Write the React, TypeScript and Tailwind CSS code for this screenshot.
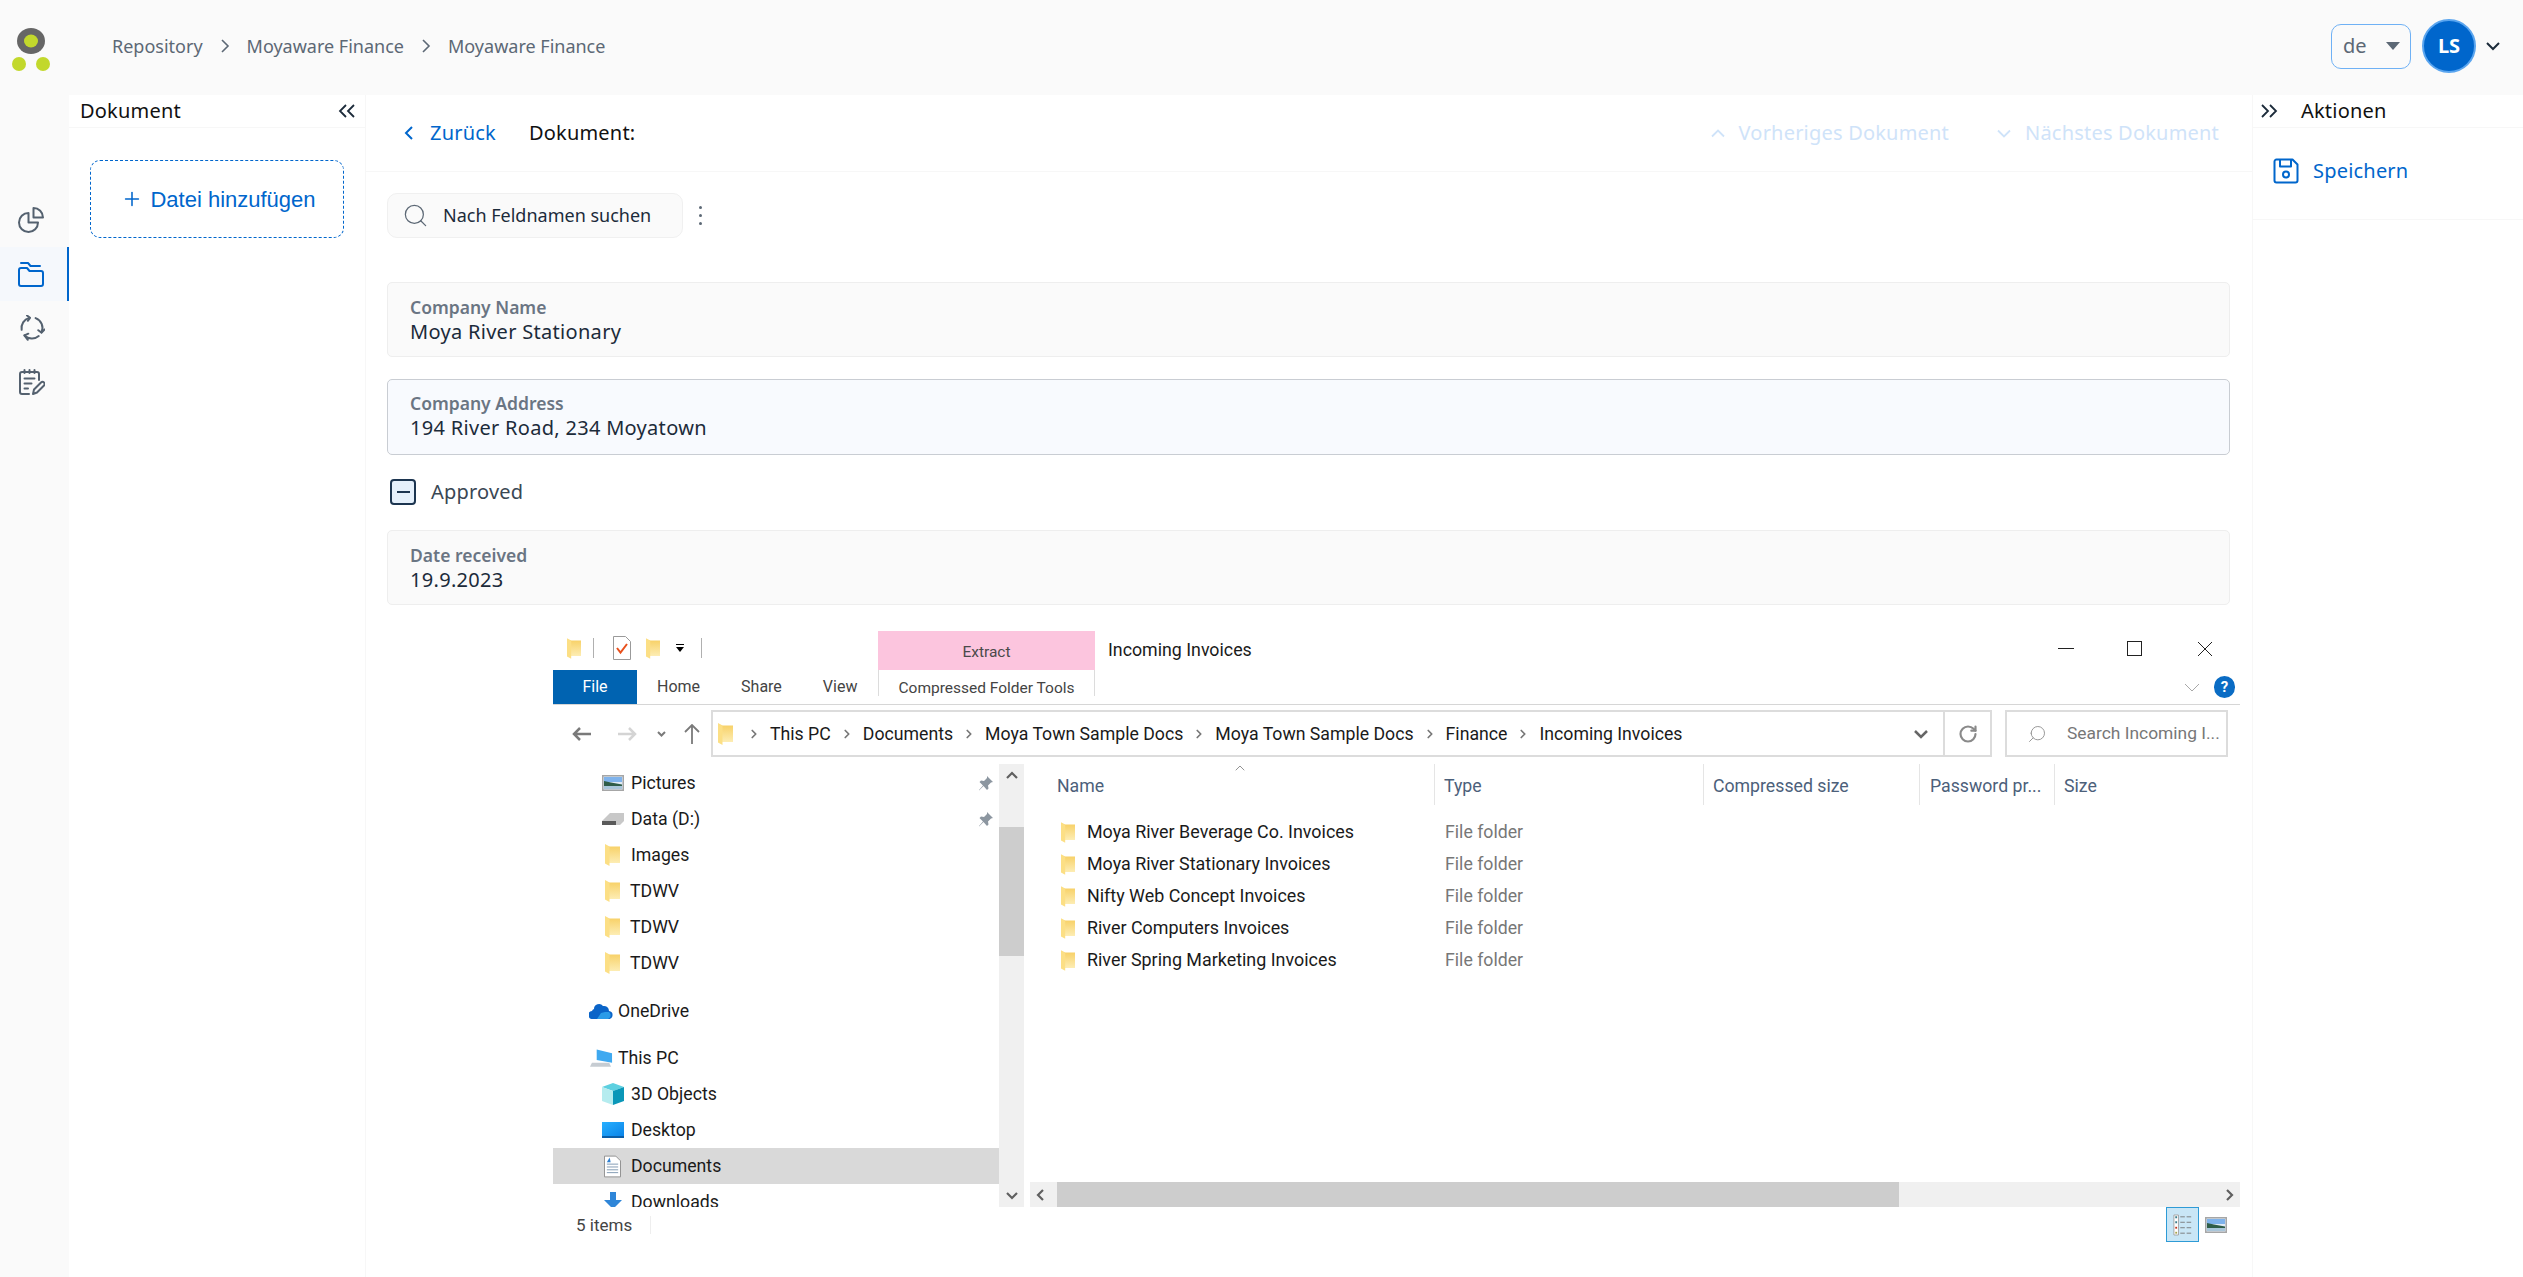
import React from 'react';
import { ChevronRight, ChevronUp, RotateCw, Search, Plus } from 'lucide-react';

const Pie = ({ className }: { className?: string }) => (
  <svg viewBox="0 0 26 26" fill="none" stroke="currentColor" strokeWidth="2" strokeLinejoin="round" className={className}>
    <path d="M10.500 6a9.500 9.500 0 1 0 9.500 9.500h-9.500z" />
    <path d="M15.500 1a9.500 9.500 0 0 1 9.500 9.500h-9.500z" />
  </svg>
);

const Folders = ({ className }: { className?: string }) => (
  <svg viewBox="0 0 26 26" fill="none" stroke="currentColor" strokeWidth="2" strokeLinejoin="round" strokeLinecap="round" className={className}>
    <path d="M1 9a2 2 0 0 1 2-2h6l2.500 3H23a2 2 0 0 1 2 2v11a2 2 0 0 1-2 2H3a2 2 0 0 1-2-2z" />
    <path d="M3 2h7l2.500 3H22" />
  </svg>
);

const Cycle = ({ className }: { className?: string }) => (
  <svg viewBox="0 0 26 26" fill="none" stroke="currentColor" strokeWidth="2" strokeLinecap="round" strokeLinejoin="round" className={className}>
    <path d="M2.660 14.820A10.500 10.500 0 0 1 10.280 2.860" />
    <path d="M16.590 3.130A10.500 10.500 0 0 1 22.500 17.400" />
    <path d="M19.750 21.040A10.500 10.500 0 0 1 5.580 20.420" />
    <path d="M8 .5l3 2.300-2.200 3" />
    <path d="M25.500 14.500l-2.900 3.200-3.300-2.500" />
    <path d="M8.800 24.800l-3.400-4.400 3.900-1.700" />
  </svg>
);

const NotesEdit = ({ className }: { className?: string }) => (
  <svg viewBox="0 0 26 26" fill="none" stroke="currentColor" strokeWidth="2" strokeLinecap="round" strokeLinejoin="round" className={className}>
    <path d="M10 25H3a2 2 0 0 1-2-2V5a2 2 0 0 1 2-2h15a2 2 0 0 1 2 2v6" />
    <path d="M5.500 1v3M10.500 1v3M15.500 1v3" />
    <path d="M5.500 9.500h10M5.500 14.500h7M5.500 19.500h3.500" />
    <path d="M14 25l1-4.500 7-7a2 2 0 0 1 3 3l-7 7z" />
  </svg>
);

const Floppy = ({ className }: { className?: string }) => (
  <svg viewBox="0 0 26 26" fill="none" stroke="currentColor" strokeWidth="2" strokeLinejoin="round" className={className}>
    <path d="M3.500 1.500h16l5 5v16a2 2 0 0 1-2 2h-19a2 2 0 0 1-2-2v-19a2 2 0 0 1 2-2z" />
    <path d="M7 1.500v7h11v-7" />
    <circle cx="13" cy="16.500" r="3" />
  </svg>
);

const Logo = () => (
  <svg viewBox="0 0 38 43" className="w-[38px] h-[43px]">
    <ellipse cx="19" cy="13" rx="14" ry="13" fill="#666666" />
    <ellipse cx="19" cy="13" rx="7" ry="6.500" fill="#c2d82c" />
    <circle cx="7" cy="36" r="7" fill="#c2d82c" />
    <circle cx="31" cy="36" r="7" fill="#c2d82c" />
  </svg>
);

const Line = ({ d, w, h, className, sw = 2 }: { d: string; w: number; h: number; className?: string; sw?: number }) => (
  <svg viewBox={`0 0 ${w} ${h}`} width={w} height={h} fill="none" stroke="currentColor" strokeWidth={sw} className={className}>
    <path d={d} />
  </svg>
);

// windows folder, seen edge on
const WinFolder = ({ className }: { className?: string }) => (
  <svg viewBox="0 0 15 22" className={className}>
    <defs>
      <linearGradient id="fold" x1="0" y1="0" x2="0" y2="1">
        <stop offset="0" stopColor="#f7cf62" />
        <stop offset="1" stopColor="#fdedb4" />
      </linearGradient>
    </defs>
    <path d="M0 1l4 1.500h11V19H0z" fill="url(#fold)" />
    <path d="M0 0l4.500 2.500V22L0 19.500z" fill="#fcdf85" />
  </svg>
);

const Pin = () => (
  <svg viewBox="0 0 16 16" className="w-[16px] h-[16px]" fill="#8c96a0">
    <path d="M9 1l6 6-2 .5-3 3 .5 3L9 15 5.500 11 1 15.500 1 15l4-4.500L1.500 7 3 5.500l3 .5 3-3z" />
  </svg>
);

const Photo = ({ className }: { className?: string }) => (
  <svg viewBox="0 0 22 16" className={className}>
    <rect x=".75" y=".75" width="20.500" height="14.500" fill="#dfeaf5" stroke="#a6a6a6" strokeWidth="1.500" />
    <path d="M2 2h18v5H2z" fill="#7fb3ec" />
    <path d="M2 6l7 1.500L20 9.500V11H2z" fill="#2f5d48" />
    <path d="M2 11h18v3H2z" fill="#a9c6da" />
  </svg>
);

const SmallChevron = ({ dir }: { dir: 'up' | 'down' | 'left' | 'right' }) => {
  const d = {
    up: 'M1 8l5-5 5 5',
    down: 'M1 4l5 5 5-5',
    left: 'M8 1L3 6l5 5',
    right: 'M4 1l5 5-5 5',
  }[dir];
  return (
    <svg viewBox="0 0 12 12" className="w-[12px] h-[12px]" fill="none" stroke="#606060" strokeWidth="2.200">
      <path d={d} />
    </svg>
  );
};

const Field = ({ label, value, active }: { label: string; value: string; active?: boolean }) => (
  <div
    className={`mr-[22px] rounded-[5px] border px-[22px] ${
      active ? 'h-[76px] pt-[13px] bg-[#f8fafe] border-[#c9cdd3]' : 'h-[75px] pt-[14px] bg-[#fafafa] border-[#eeeeee]'
    }`}
  >
    <div className="text-[17.500px] leading-[20px] font-semibold text-[#6a7583]">{label}</div>
    <div className="text-[20px] leading-[30px] tracking-[0.3px] text-[#1c2b3a]">{value}</div>
  </div>
);

const files = [
  'Moya River Beverage Co. Invoices',
  'Moya River Stationary Invoices',
  'Nifty Web Concept Invoices',
  'River Computers Invoices',
  'River Spring Marketing Invoices',
];

const crumbs = ['This PC', 'Documents', 'Moya Town Sample Docs', 'Moya Town Sample Docs', 'Finance', 'Incoming Invoices'];

const Explorer = () => (
  <div className="ml-[166px] w-[1687px] mt-[26px] font-['Roboto',sans-serif] text-[17.700px] text-[#1a1a1a]">
    {/* title bar */}
    <div className="flex h-[39px]">
      <div className="flex items-center w-[325px] pl-[14px] pb-[5px]">
        <WinFolder className="w-[14px] h-[21px]" />
        <div className="ml-[12px] w-px h-[20px] bg-[#b0b0b0]" />
        <svg viewBox="0 0 18 24" className="ml-[19px] w-[18px] h-[24px]">
          <path d="M.5.5h12l5 5v18H.5z" fill="#fff" stroke="#9a9a9a" />
          <path d="M4 12l3.500 4.500L14 8" fill="none" stroke="#e8501c" strokeWidth="2" />
        </svg>
        <WinFolder className="ml-[15px] w-[14px] h-[21px]" />
        <div className="ml-[16px] flex flex-col items-center">
          <div className="w-[8px] h-[1px] bg-black mb-[2px]" />
          <div className="w-0 h-0 border-x-[4px] border-x-transparent border-t-[5px] border-t-black" />
        </div>
        <div className="ml-[17px] w-px h-[20px] bg-[#b0b0b0]" />
      </div>
      <div className="w-[217px] bg-[#fcc5de] flex items-end justify-center pb-[6px] text-[15.500px] text-[#4a4a4a]">Extract</div>
      <div className="ml-[13px] pt-[6px] text-[17.800px]">Incoming Invoices</div>
      <div className="ml-auto flex items-start pt-[10px] pr-[27px]">
        <div className="mt-[7px] w-[16px] h-[1px] bg-[#222]" />
        <div className="ml-[53px] w-[15px] h-[15px] border border-[#222]" />
        <svg viewBox="0 0 16 16" className="ml-[55px] w-[16px] h-[16px]" stroke="#222" strokeWidth="1"><path d="M1 1l14 14M15 1L1 15" /></svg>
      </div>
    </div>
    {/* ribbon tabs */}
    <div className="flex h-[35px] border-b border-[#d6d6d6] items-stretch text-[16px]">
      <div className="w-[84px] bg-[#0063b1] text-white flex items-center justify-center">File</div>
      <div className="flex items-center w-[241px] text-[#444]">
        <span className="ml-[20px]">Home</span>
        <span className="ml-[41px]">Share</span>
        <span className="ml-[41px]">View</span>
      </div>
      <div className="w-[217px] h-[26px] border-x border-[#dcdcdc] flex items-start justify-center pt-[8px] text-[15.500px] leading-[20px] text-[#444]">
        Compressed Folder Tools
      </div>
      <div className="ml-auto flex items-center pr-[5px]">
        <Line d="M1 1l7 7 7-7" w={16} h={9} sw={1} className="text-[#a8a8a8]" />
        <div className="ml-[14px] w-[21px] h-[22px] rounded-full bg-[#0a6cc4] text-white text-[15px] font-bold flex items-center justify-center">?</div>
      </div>
    </div>
    {/* address bar */}
    <div className="flex items-center h-[47px] mt-[5px]">
      <div className="flex items-center w-[158px] pl-[19px]">
        <Line d="M8 2L2 8l6 6M2 8h17" w={19} h={16} sw={2.500} className="text-[#7a7a7a]" />
        <Line d="M11 2l6 6-6 6M17 8H0" w={19} h={16} sw={2.500} className="ml-[27px] text-[#d4d4d4]" />
        <Line d="M1 1l3.500 3.500L8 1" w={9} h={6} sw={2} className="ml-[20px] text-[#7a7a7a]" />
        <Line d="M1 8l7-7 7 7M8 1v19" w={16} h={20} sw={1.800} className="ml-[18px] text-[#7a7a7a]" />
      </div>
      <div className="flex items-center w-[1281px] h-full border-2 border-[#dcdcdc] pl-[5px]">
        <WinFolder className="w-[15px] h-[22px]" />
        <div className="flex items-center pt-[1px]">
          {crumbs.map((c, i) => (
            <React.Fragment key={i}>
              <ChevronRight className={`w-[14px] h-[14px] text-[#777] mx-[9px] ${i === 0 ? 'ml-[14px]' : ''}`} strokeWidth={3} />
              <span className="whitespace-nowrap">{c}</span>
            </React.Fragment>
          ))}
        </div>
        <div className="ml-auto flex h-full items-center">
          <Line d="M2 2l6 6 6-6" w={16} h={10} sw={2.500} className="text-[#666] mr-[14px]" />
          <div className="w-[47px] h-full border-l-2 border-[#dcdcdc] flex items-center justify-center">
            <RotateCw className="w-[20px] h-[20px] text-[#8a8a8a]" strokeWidth={2.600} />
          </div>
        </div>
      </div>
      <div className="ml-[13px] w-[223px] h-full border-2 border-[#dcdcdc] flex items-center pl-[20px] text-[#777]">
        <Search className="w-[20px] h-[20px] text-[#999] -scale-x-100 shrink-0" strokeWidth={1.200} />
        <span className="ml-[20px] text-[17.400px] whitespace-nowrap">Search Incoming I...</span>
      </div>
    </div>
    {/* panes */}
    <div className="flex h-[443px] mt-[7px]">
      <div className="w-[446px] overflow-hidden pt-[1px]">
        <div className="flex items-center h-[36px] pl-[49px] pr-[5px]">
          <Photo className="w-[22px] h-[16px]" />
          <span className="ml-[7px]">Pictures</span>
          <span className="ml-auto"><Pin /></span>
        </div>
        <div className="flex items-center h-[36px] pl-[49px] pr-[5px]">
          <svg viewBox="0 0 22 12" className="w-[22px] h-[12px]"><path d="M0 8l8-8h14v8l-4 4H3z" fill="#c8c8c8" /><path d="M0 8h14v4H0z" fill="#5a5a5a" /></svg>
          <span className="ml-[7px]">Data (D:)</span>
          <span className="ml-auto"><Pin /></span>
        </div>
        {['Images', 'TDWV', 'TDWV', 'TDWV'].map((n, i) => (
          <div key={i} className="flex items-center h-[36px] pl-[52px]">
            <WinFolder className="w-[15px] h-[22px]" />
            <span className={n === 'Images' ? 'ml-[11px]' : 'ml-[10px]'}>{n}</span>
          </div>
        ))}
        <div className="flex items-center h-[36px] mt-[12px] pl-[36px]">
          <svg viewBox="0 0 24 16" className="w-[24px] h-[16px]">
            <path d="M5 6a5 5 0 0 1 9-3 5 5 0 0 1 6 5 4 4 0 0 1-1 8H4a4 4 0 0 1-1-8 3 3 0 0 1 2-2z" fill="#0a64c8" />
            <path d="M8 16l4-6 4-1 4 0a4 4 0 0 1-1 7z" fill="#2a9be8" />
          </svg>
          <span className="ml-[5px]">OneDrive</span>
        </div>
        <div className="flex items-center h-[35px] mt-[12px] pl-[37px]">
          <svg viewBox="0 0 24 20" className="w-[23px] h-[20px]">
            <path d="M7 0l16 4v10l-16-3z" fill="#3fa9f0" />
            <path d="M2 14h18l2 4H0z" fill="#c6ccd2" />
          </svg>
          <span className="ml-[5px]">This PC</span>
        </div>
        <div className="flex items-center h-[36px] pl-[49px]">
          <svg viewBox="0 0 22 22" className="w-[22px] h-[22px]">
            <path d="M11 0l11 4-11 4L0 4z" fill="#5dd0e0" />
            <path d="M0 4l11 4v14L0 18z" fill="#b5ecef" />
            <path d="M22 4l-11 4v14l11-4z" fill="#0a97b8" />
          </svg>
          <span className="ml-[7px]">3D Objects</span>
        </div>
        <div className="flex items-center h-[36px] pl-[49px]">
          <div className="w-[22px] h-[16px] bg-gradient-to-br from-[#28b0ff] to-[#0a84e8] border-b-2 border-[#0a5ea8]" />
          <span className="ml-[7px]">Desktop</span>
        </div>
        <div className="flex items-center h-[36px] pl-[51px] bg-[#d9d9d9]">
          <svg viewBox="0 0 18 23" className="w-[17px] h-[23px]">
            <path d="M.5.5h12l5 5v17H.5z" fill="#fff" stroke="#8d8d8d" />
            <path d="M3 9h12M3 12h12M3 15h12M3 18h12" stroke="#7e98b0" strokeWidth="1" />
            <path d="M3 7l3-5 1 5z" fill="#2f7fcf" />
          </svg>
          <span className="ml-[10px]">Documents</span>
        </div>
        <div className="flex items-center h-[36px] pl-[51px]">
          <svg viewBox="0 0 18 20" className="w-[18px] h-[20px]">
            <path d="M6 0h6v8h6l-9 9-9-9h6z" fill="#2f86d8" />
          </svg>
          <span className="ml-[9px]">Downloads</span>
        </div>
      </div>
      <div className="w-[25px] bg-[#f0f0f0] flex flex-col items-center justify-between py-[6px] relative">
        <SmallChevron dir="up" />
        <div className="absolute left-0 top-[63px] w-full h-[129px] bg-[#cdcdcd]" />
        <SmallChevron dir="down" />
      </div>
      <div className="ml-[6px] flex-1 flex flex-col">
        <div className="flex h-[41px] text-[#4c607a] items-stretch">
          <div className="w-[405px] pl-[27px] pt-[3px] flex items-center border-r border-[#e5e5e5] relative">
            Name
            <ChevronUp className="absolute left-[202px] top-[-4px] w-[16px] h-[16px] text-[#777]" strokeWidth={1.200} />
          </div>
          <div className="w-[269px] pl-[9px] pt-[3px] flex items-center border-r border-[#e5e5e5]">Type</div>
          <div className="w-[216px] pl-[9px] pt-[3px] flex items-center border-r border-[#e5e5e5]">Compressed size</div>
          <div className="w-[135px] pl-[10px] pt-[3px] flex items-center border-r border-[#e5e5e5] whitespace-nowrap">Password pr...</div>
          <div className="pl-[9px] pt-[3px] flex items-center">Size</div>
        </div>
        <div className="mt-[11px] flex-1">
          {files.map((f) => (
            <div key={f} className="flex items-center h-[32px]">
              <WinFolder className="ml-[31px] w-[14px] h-[21px] shrink-0" />
              <span className="ml-[12px] w-[358px] text-[17.900px] whitespace-nowrap">{f}</span>
              <span className="text-[#777]">File folder</span>
            </div>
          ))}
        </div>
        <div className="h-[25px] bg-[#f0f0f0] relative flex items-center justify-between px-[5px]">
          <SmallChevron dir="left" />
          <div className="absolute left-[27px] top-0 h-full w-[842px] bg-[#cdcdcd]" />
          <SmallChevron dir="right" />
        </div>
      </div>
    </div>
    {/* status bar */}
    <div className="flex h-[35px] items-center text-[#444]">
      <span className="ml-[23px] pt-[2px] text-[17px]">5 items</span>
      <div className="ml-[18px] w-px h-[18px] bg-[#eeeeee]" />
      <div className="ml-auto flex items-center pr-[13px]">
        <div className="w-[33px] h-[35px] bg-[#c9e6f6] border border-[#2e9bd6] flex items-center justify-center">
          <svg viewBox="0 0 22 24" className="w-[20px] h-[22px]">
            <path d="M1 1h5v22H1z" fill="#fff" stroke="#a0a0a0" />
            <path d="M2.500 3.500h2M2.500 9h2" stroke="#3a7d8c" strokeWidth="2" />
            <path d="M2.500 15h2" stroke="#c0321c" strokeWidth="2" />
            <path d="M2.500 20.500h2" stroke="#a8a44a" strokeWidth="2" />
            <path d="M8 3h5M15 3h5M8 9h5M15 9h5M8 15h5M15 15h5M8 21h5M15 21h5" stroke="#777" strokeWidth="1" />
          </svg>
        </div>
        <Photo className="ml-[6px] w-[22px] h-[16px]" />
      </div>
    </div>
  </div>
);

export default function App() {
  return (
    <div className="w-[2523px] h-[1277px] overflow-hidden bg-white font-['Noto_Sans',sans-serif] text-[#1c2b3a]">
      <header className="flex items-center h-[95px] pb-[3px] bg-[#fafafa]">
        <div className="ml-[12px] mt-[6px]"><Logo /></div>
        <nav className="ml-[62px] flex items-center text-[18px] text-[#5c6875]">
          <span>Repository</span>
          <Line d="M2 1l6 6-6 6" w={10} h={14} sw={1.600} className="mx-[17px]" />
          <span>Moyaware Finance</span>
          <Line d="M2 1l6 6-6 6" w={10} h={14} sw={1.600} className="mx-[17px]" />
          <span>Moyaware Finance</span>
        </nav>
        <div className="ml-auto flex items-center">
          <div className="flex items-center justify-between w-[80px] h-[45px] rounded-[10px] border border-[#6fb1f5] pl-[11px] pr-[10px] text-[20px] text-[#5c6875]">
            <span>de</span>
            <div className="w-0 h-0 border-x-[7px] border-x-transparent border-t-[8px] border-t-[#5c6875]" />
          </div>
          <div className="ml-[11px] w-[54px] h-[54px] rounded-full bg-[#0066cc] border-2 border-[#5aa5ef] text-white font-bold text-[20px] flex items-center justify-center">LS</div>
          <Line d="M1 1l6 6 6-6" w={14} h={9} sw={2} className="ml-[10px] mr-[23px]" />
        </div>
      </header>
      <div className="flex h-[1182px]">
        <aside className="w-[69px] shrink-0 bg-[#fafafa] flex flex-col pt-[98px]">
          <div className="h-[54px] pr-[7px] flex items-center justify-center text-[#54616f]"><Pie className="w-[26px] h-[26px]" /></div>
          <div className="h-[54px] pr-[5px] flex items-center justify-center bg-[#f5f8fc] border-r-2 border-[#0066cc] text-[#0066cc]"><Folders className="w-[26px] h-[26px]" /></div>
          <div className="h-[54px] pr-[5px] flex items-center justify-center text-[#54616f]"><Cycle className="w-[26px] h-[26px]" /></div>
          <div className="h-[54px] pr-[6px] flex items-center justify-center text-[#54616f]"><NotesEdit className="w-[26px] h-[26px]" /></div>
        </aside>
        <section className="w-[297px] shrink-0 border-r border-[#f7f7f7]">
          <div className="flex items-center justify-between h-[33px] pl-[11px] pr-[9px] border-b border-[#f7f7f7]">
            <span className="text-[20px] tracking-[0.2px] text-[#111]">Dokument</span>
            <Line d="M8 1L2 7l6 6M16 1l-6 6 6 6" w={18} h={14} sw={1.800} />
          </div>
          <div className="mt-[32px] ml-[21px] w-[254px] h-[78px] pl-[3px] rounded-[10px] border-[1.500px] border-dashed border-[#0066cc] flex items-center justify-center font-['Liberation_Sans',sans-serif] text-[22px] text-[#0066cc]">
            <Plus className="w-[22px] h-[22px] mr-[7px]" strokeWidth={1.700} />
            Datei hinzufügen
          </div>
        </section>
        <main className="flex-1 min-w-0">
          <div className="flex items-center h-[77px] border-b border-[#f7f7f7] pl-[38px] pr-[33px] text-[20px] tracking-[0.2px]">
            <Line d="M8 1L2 7l6 6" w={10} h={14} sw={2} className="text-[#0066cc]" />
            <span className="ml-[16px] text-[#0066cc]">Zurück</span>
            <span className="ml-[33px] text-[#111]">Dokument:</span>
            <div className="ml-auto flex items-center text-[#cfe3f9]">
              <Line d="M1 7.500l6-6 6 6" w={14} h={9} sw={1.800} />
              <span className="ml-[14px]">Vorheriges Dokument</span>
              <Line d="M1 1.500l6 6 6-6" w={14} h={9} sw={1.800} className="ml-[48px]" />
              <span className="ml-[14px]">Nächstes Dokument</span>
            </div>
          </div>
          <div className="pl-[21px]">
            <div className="mt-[21px] flex items-center">
              <div className="flex items-center w-[296px] h-[45px] rounded-[10px] border border-[#f0f0f0] bg-[#fafafa] pl-[14px]">
                <Search className="w-[27px] h-[27px] text-[#5c6875] shrink-0" strokeWidth={1.100} />
                <span className="ml-[14px] text-[18px] whitespace-nowrap text-[#1c2b3a]">Nach Feldnamen suchen</span>
              </div>
              <div className="ml-[16px] flex flex-col gap-[5px]">
                <div className="w-[3px] h-[3px] rounded-full bg-[#5c6875]" />
                <div className="w-[3px] h-[3px] rounded-full bg-[#5c6875]" />
                <div className="w-[3px] h-[3px] rounded-full bg-[#5c6875]" />
              </div>
            </div>
            <div className="mt-[44px]"><Field label="Company Name" value="Moya River Stationary" /></div>
            <div className="mt-[22px]"><Field label="Company Address" value="194 River Road, 234 Moyatown" active /></div>
            <div className="mt-[24px] flex items-center h-[26px] pl-[3px]">
              <div className="w-[26px] h-[26px] rounded-[4px] border-2 border-[#1c3550] bg-[#e5f0fb] flex items-center justify-center">
                <div className="w-[13px] h-[2px] bg-[#1c3550]" />
              </div>
              <span className="ml-[15px] text-[20px] tracking-[0.2px] text-[#3a4754]">Approved</span>
            </div>
            <div className="mt-[25px]"><Field label="Date received" value="19.9.2023" /></div>
            <Explorer />
          </div>
        </main>
        <section className="w-[271px] shrink-0 border-l border-[#f7f7f7]">
          <div className="flex items-center h-[33px] pl-[7px] border-b border-[#f7f7f7]">
            <Line d="M2 1l6 6-6 6M10 1l6 6-6 6" w={18} h={14} sw={1.800} />
            <span className="ml-[23px] text-[20px] tracking-[0.2px] text-[#111]">Aktionen</span>
          </div>
          <div className="flex items-center h-[92px] pb-[5px] pl-[20px] border-b border-[#f7f7f7] text-[#0066cc]">
            <Floppy className="w-[26px] h-[26px]" />
            <span className="ml-[14px] text-[20px] tracking-[0.2px]">Speichern</span>
          </div>
        </section>
      </div>
    </div>
  );
}
